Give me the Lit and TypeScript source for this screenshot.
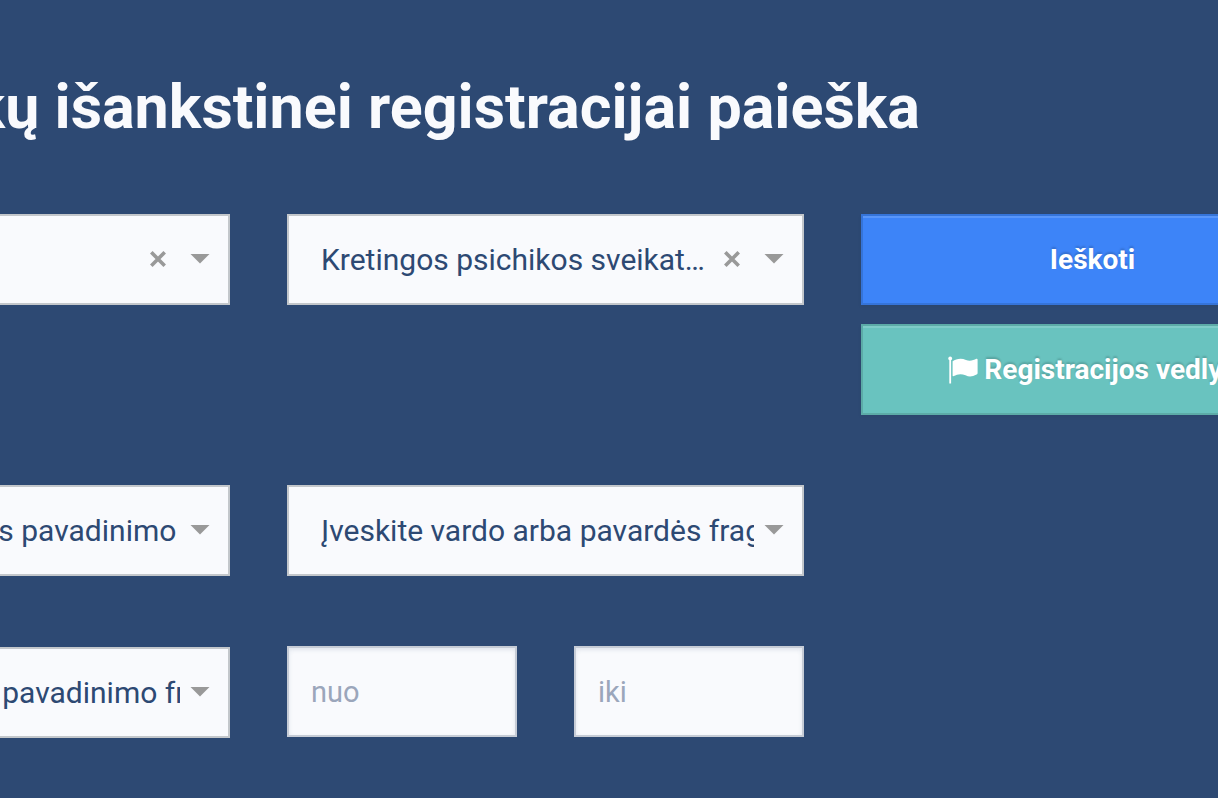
import { LitElement, html, css } from "lit";
import { customElement, property } from "lit/decorators.js";

@customElement("combo-field")
class ComboField extends LitElement {
  @property() label = "";
  @property() value = "";
  @property({ type: Boolean }) clearable = false;

  static styles = css`
    :host {
      display: block;
    }
    .box {
      position: relative;
    }
    .select {
      appearance: none;
      display: block;
      box-sizing: border-box;
      width: 100%;
      height: 91px;
      margin: 0;
      padding: 0 48px 0 32px;
      border: 2px solid #c3c7cb;
      border-radius: 0;
      background: #f9fafd;
      color: #2d4973;
      font: 400 30px/36px Roboto, sans-serif;
      white-space: nowrap;
      overflow: hidden;
      outline: none;
    }
    .clearable {
      padding-right: 96px;
      text-overflow: ellipsis;
    }
    .clear {
      position: absolute;
      top: 0;
      bottom: 2px;
      right: 60px;
      width: 24px;
      padding: 0;
      border: 0;
      background: none;
      color: #999;
      display: flex;
      align-items: center;
      justify-content: center;
    }
    .arrow {
      position: absolute;
      top: 40px;
      right: 20px;
      width: 20px;
      height: 10px;
      fill: #999;
      pointer-events: none;
    }
  `;

  render() {
    return html`
      <div class="box">
        <select class="select ${this.clearable ? "clearable" : ""}" aria-label=${this.label}>
          <option>${this.value}</option>
        </select>
        ${this.clearable
          ? html`<button class="clear" type="button" aria-label="Išvalyti">
              <svg width="16" height="16" viewBox="0 0 16 16" fill="none" stroke="currentColor" stroke-width="3.6">
                <path d="M1.3 1.3 L14.7 14.7 M14.7 1.3 L1.3 14.7" />
              </svg>
            </button>`
          : ""}
        <svg class="arrow" viewBox="0 0 20 10"><path d="M0.5 0 H19.5 L10 9.6 Z" /></svg>
      </div>
    `;
  }
}

@customElement("app-root")
class AppRoot extends LitElement {
  static styles = css`
    :host {
      display: block;
      box-sizing: border-box;
      min-height: 100vh;
      overflow: hidden;
      background: #2d4973;
      font-family: Roboto, sans-serif;
    }
    .page {
      margin: 0 -106px 0 -287px;
      padding: 67px 0 60px;
    }
    .title {
      margin: 0 404px 67px 0;
      color: #f9fafd;
      font-size: 61px;
      line-height: 80px;
      font-weight: 700;
      text-align: right;
      white-space: nowrap;
    }
    .form {
      display: grid;
      grid-template-columns: 517fr 517fr 463fr;
      column-gap: 57px;
      row-gap: 70px;
    }
    .actions {
      display: flex;
      flex-direction: column;
      gap: 19px;
    }
    .action {
      display: flex;
      align-items: center;
      justify-content: center;
      gap: 6px;
      height: 91px;
      border: 2px solid rgba(0, 0, 0, 0.12);
      color: #fff;
      font: 700 28px/36px Roboto, sans-serif;
      text-shadow: 0 -2px 2px rgba(0, 0, 0, 0.16);
      box-shadow: inset 0 2px 0 rgba(255, 255, 255, 0.15), 0 2px 4px rgba(0, 0, 0, 0.05);
    }
    .search {
      background-color: #3d84f8;
    }
    .wizard {
      background-color: #69c3bf;
    }
    .flag {
      width: 30px;
      height: 28px;
      fill: #fff;
    }
    .last {
      grid-column: 1;
      align-self: end;
    }
    .range {
      display: grid;
      grid-template-columns: 1fr 1fr;
      gap: 57px;
      padding-bottom: 1px;
    }
    .text {
      box-sizing: border-box;
      width: 100%;
      min-width: 0;
      height: 91px;
      padding: 0 22px;
      border: 2px solid #c6ccd6;
      border-radius: 0;
      background: #f9fafd;
      color: #2d4973;
      font: 400 29px/36px Roboto, sans-serif;
      box-shadow: inset 0 2px 4px rgba(45, 73, 115, 0.12);
      outline: none;
    }
    .text::placeholder {
      color: #9ba6bb;
      opacity: 1;
    }
  `;

  render() {
    return html`
      <main class="page">
        <h1 class="title">Laikų išankstinei registracijai paieška</h1>
        <form class="form">
          <combo-field label="Savivaldybė" value="" clearable></combo-field>
          <combo-field label="Įstaiga" value="Kretingos psichikos sveikatos centras" clearable></combo-field>
          <div class="actions">
            <button class="action search" type="button">Ieškoti</button>
            <button class="action wizard" type="button">
              <svg class="flag" viewBox="0 0 30 28">
                <circle cx="2.2" cy="2.4" r="1.9" />
                <path d="M1.3 2.6 H3.1 V27.5 H1.3 Z" />
                <path d="M4.6 5.2 C8 3 13 1.6 18 4 C22 5.8 25.5 4.2 28.4 2.8 Q29.6 2.5 29.6 3.8 V17 Q29.6 18 28.6 18.5 C24.5 20.6 21.5 21.3 17.5 19.3 C13 17.2 9 18.2 5.8 20.1 Q4.6 20.7 4.6 19.5 Z" />
              </svg>
              <span>Registracijos vedlys</span>
            </button>
          </div>
          <combo-field label="Specialybė" value="Įveskite specialybės pavadinimo fragmentą"></combo-field>
          <combo-field label="Gydytojas" value="Įveskite vardo arba pavardės fragmentą"></combo-field>
          <combo-field class="last" label="Paslauga" value="Įveskite paslaugos pavadinimo fragmentą"></combo-field>
          <div class="range">
            <input class="text" type="text" placeholder="nuo" aria-label="Data nuo" />
            <input class="text" type="text" placeholder="iki" aria-label="Data iki" />
          </div>
        </form>
      </main>
    `;
  }
}
